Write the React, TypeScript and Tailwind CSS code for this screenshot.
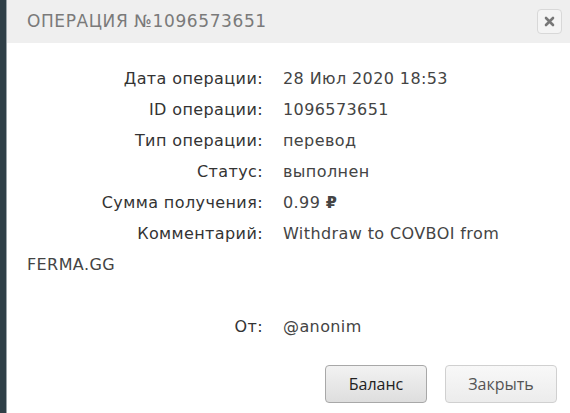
import React from "react";

const rows: [string, React.ReactNode][] = [
  ["Дата операции:", "28 Июл 2020 18:53"],
  ["ID операции:", "1096573651"],
  ["Тип операции:", "перевод"],
  ["Статус:", "выполнен"],
  ["Сумма получения:", <>0.99 <span className="font-bold">₽</span></>],
];

export default function App() {
  return (
    <div className="flex h-[413px] w-[570px] overflow-hidden bg-white" style={{ fontFamily: "'DejaVu Sans', sans-serif" }}>
      <div className="w-[6px] shrink-0 bg-[#2f3f47]" />
      <div className="w-px shrink-0 bg-[#9aa3a8]" />
      <div className="flex flex-1 flex-col">
        <div className="flex h-[43px] items-center justify-between bg-[#efefef] pl-[20px] pr-[8px]">
          <div className="text-[17px] uppercase tracking-[0.6px] text-[#7a7a7a]">Операция №1096573651</div>
          <div className="flex h-[25px] w-[25px] items-center justify-center rounded-[4px] border border-[#d8d8d8] bg-[#f4f4f4]">
            <svg width="11" height="11" viewBox="0 0 11 11">
              <path d="M2 2 L9 9 M9 2 L2 9" stroke="#777" strokeWidth="2.6" strokeLinecap="round" />
            </svg>
          </div>
        </div>
        <div className="flex-1 pl-[20px] pr-[10px] pt-[20px] text-[16px] leading-[31px] tracking-[0.4px] text-[#3a3a3a]">
          {rows.map(([l, v]) => (
            <div key={l}>
              <span className="inline-block w-[236px] text-right text-[#333]">{l}</span>
              <span className="ml-[20px] text-[#444]">{v}</span>
            </div>
          ))}
          <div>
            <span className="inline-block w-[236px] text-right text-[#333]">Комментарий:</span>
            <span className="ml-[20px] text-[#444]">Withdraw to COVBOI from FERMA.GG</span>
          </div>
          <div className="h-[31px]" />
          <div>
            <span className="inline-block w-[236px] text-right text-[#333]">От:</span>
            <span className="ml-[20px] text-[#444]">@anonim</span>
          </div>
          <div className="mt-[23px] flex justify-end gap-[18px] pr-[3px] tracking-normal" style={{ fontFamily: "'Open Sans', sans-serif" }}>
            <button className="h-[38px] w-[102px] rounded-[4px] border border-[#a8a8a8] bg-gradient-to-b from-[#f2f2f2] to-[#dedede] text-[16px] text-[#222]">Баланс</button>
            <button className="h-[38px] w-[112px] rounded-[4px] border border-[#d0d0d0] bg-gradient-to-b from-[#f8f8f8] to-[#ececec] text-[16px] text-[#555]">Закрыть</button>
          </div>
        </div>
      </div>
    </div>
  );
}
